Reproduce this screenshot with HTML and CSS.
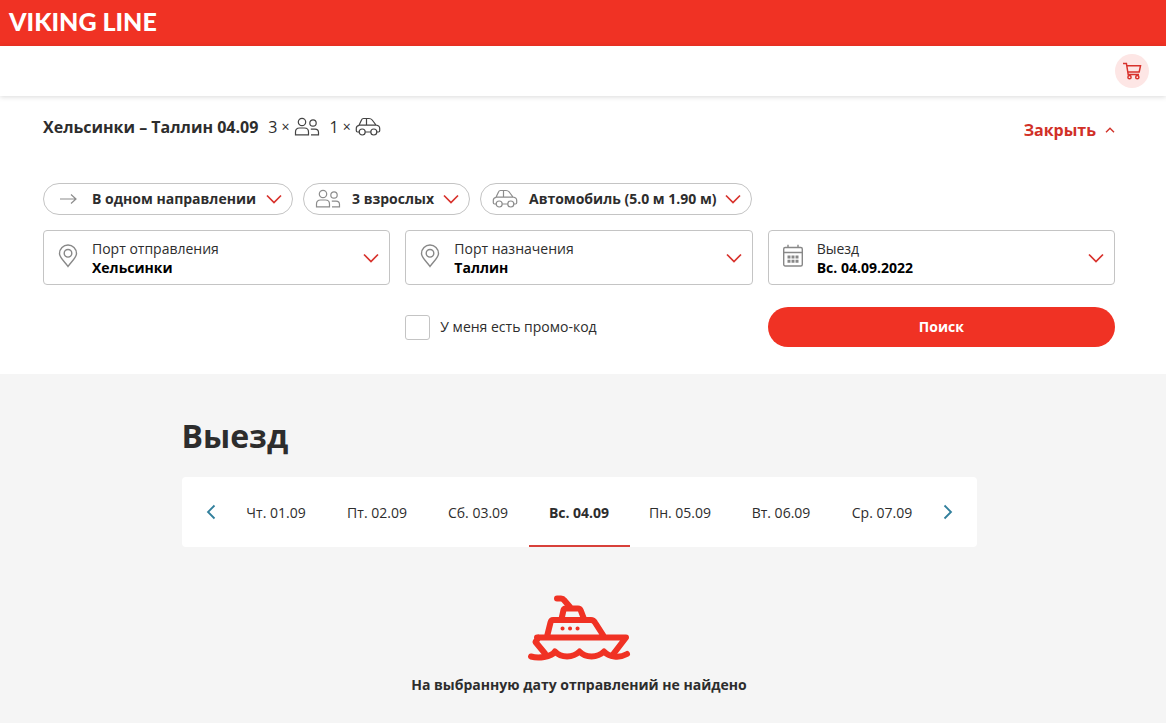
FILE: index.html
```html
<!DOCTYPE html>
<html lang="ru">
<head>
<meta charset="utf-8">
<meta name="viewport" content="width=device-width, initial-scale=1">
<title>Viking Line</title>
<link rel="stylesheet" href="styles.css">
</head>
<body>
<svg class="sprite" aria-hidden="true">
  <symbol id="people" viewBox="0 0 26 20">
    <circle cx="8" cy="5" r="3.700"/><circle cx="19" cy="6" r="3.200"/>
    <path d="M1.500 17.800v-2.800q0-4 4-4h5q4 0 4 4v2.800zM16.800 12.200h4.200q3.500 0 3.500 3.300v2.300h-7.500"/>
  </symbol>
  <symbol id="car" viewBox="0 0 26 20">
    <path d="M4.200 15H2.500q-1.200 0-1.200-1.200v-2.500q0-2.500 2.700-3L6.500 3Q7 1.500 8.500 1.500h5.500q2 0 3.200 1.500L21 8q3.700.6 3.700 3.500v2.300q0 1.200-1.200 1.200h-1.700M10.200 15h5.600M4 8.200h17M11.500 1.500v6.700"/>
    <circle cx="7.200" cy="15" r="3"/><circle cx="18.800" cy="15" r="3"/>
  </symbol>
  <symbol id="pin" viewBox="0 0 20 24">
    <path d="M10 22.500C7.500 18.500 1.500 13.800 1.500 9.500a8.500 8.500 0 0 1 17 0c0 4.300-6 9-8.500 13z"/><circle cx="10" cy="9.300" r="3.800"/>
  </symbol>
  <symbol id="down" viewBox="0 0 16 10"><path d="M1 1.500l7 7 7-7"/></symbol>
</svg>

<header>
  <div class="brand"><a class="logo" href="#">VIKING LINE</a></div>
  <div class="toolbar">
    <button class="cart" type="button" aria-label="Корзина">
      <svg width="20" height="18" viewBox="0 0 20 18"><path d="M1 1.500h3.400l1.800 11h10.800M4.800 3.800H18.500l-1.300 6.200H5.800"/><circle cx="7.500" cy="15.200" r="1.600"/><circle cx="15.300" cy="15.200" r="1.600"/></svg>
    </button>
  </div>
</header>

<main>
  <section class="search">
    <div class="summary">
      <strong class="route">Хельсинки – Таллин 04.09</strong>
      <span class="count">3 <small>×</small><svg class="icon dark"><use href="#people"/></svg></span>
      <span class="count">1 <small>×</small><svg class="icon dark"><use href="#car"/></svg></span>
      <button class="close" type="button">Закрыть
        <svg width="10" height="6" viewBox="0 0 10 6"><path d="M1 5.300l4-4 4 4"/></svg>
      </button>
    </div>

    <form class="form">
      <div class="pills">
        <label class="pill">
          <svg class="icon" viewBox="0 0 26 20"><path d="M5 10h16M16 5.500l5 4.500-5 4.500"/></svg>
          <select aria-label="Направление"><option>В одном направлении</option></select>
          <svg class="chevron"><use href="#down"/></svg>
        </label>
        <button class="pill" type="button">
          <svg class="icon"><use href="#people"/></svg>
          <span>3 взрослых</span>
          <svg class="chevron"><use href="#down"/></svg>
        </button>
        <button class="pill" type="button">
          <svg class="icon"><use href="#car"/></svg>
          <span>Автомобиль (5.0 м 1.90 м)</span>
          <svg class="chevron"><use href="#down"/></svg>
        </button>
      </div>

      <div class="grid">
        <label class="field">
          <svg class="mark"><use href="#pin"/></svg>
          <span class="lines"><span>Порт отправления</span>
            <select><option>Хельсинки</option></select></span>
          <svg class="chevron"><use href="#down"/></svg>
        </label>
        <label class="field">
          <svg class="mark"><use href="#pin"/></svg>
          <span class="lines"><span>Порт назначения</span>
            <select><option>Таллин</option></select></span>
          <svg class="chevron"><use href="#down"/></svg>
        </label>
        <button class="field" type="button">
          <svg class="mark" viewBox="0 0 20 24"><rect x=".7" y="3.500" width="18.600" height="18.500" rx="1.500"/><path d="M.7 8.500h18.600M5 .8v2.700M15 .8v2.700"/><path class="days" d="M4.500 13h11M4.500 17.300h11"/></svg>
          <span class="lines"><span>Выезд</span><strong>Вс. 04.09.2022</strong></span>
          <svg class="chevron"><use href="#down"/></svg>
        </button>
        <label class="promo"><input type="checkbox">У меня есть промо-код</label>
        <button class="submit" type="submit">Поиск</button>
      </div>
    </form>
  </section>

  <section class="results">
    <div class="inner">
      <h1>Выезд</h1>
      <nav class="dates">
        <button class="arrow" type="button" aria-label="Назад"><svg width="10" height="16" viewBox="0 0 10 16"><path d="M8.500 1.500L2 8l6.500 6.500"/></svg></button>
        <button class="date" type="button">Чт. 01.09</button>
        <button class="date" type="button">Пт. 02.09</button>
        <button class="date" type="button">Сб. 03.09</button>
        <button class="date current" type="button" aria-current="date">Вс. 04.09</button>
        <button class="date" type="button">Пн. 05.09</button>
        <button class="date" type="button">Вт. 06.09</button>
        <button class="date" type="button">Ср. 07.09</button>
        <button class="arrow" type="button" aria-label="Вперёд"><svg width="10" height="16" viewBox="0 0 10 16"><path d="M1.500 1.500L8 8l-6.500 6.500"/></svg></button>
      </nav>
      <div class="empty">
        <svg class="ship" width="104" height="68" viewBox="0 0 104 68">
          <path d="M10 43.500H99L86 60.500M18 59.500L8.500 48l3-4.500M20 42.500l3.500-14q.6-2.500 2.500-2.500h38q2.500 0 4 2.500l9 14M34.500 25l2-9q.5-1.500 2-1.500h12.500q2 0 2.800 2l3.200 8.500M30 4.500h4q2 0 3.200 1.700L43 13"/>
          <path d="M4 62.500c7 2 20 1 24-5 6 6.500 18 6.500 24.500 0 6 6.500 18 6.500 24.500 0 5 5.500 15 7 23 2.500"/>
          <path class="windows" d="M35.500 34.500h.1M43 34.500h.1M50.500 34.500h.1"/>
        </svg>
        <p>На выбранную дату отправлений не найдено</p>
      </div>
    </div>
  </section>
</main>
</body>
</html>
```
FILE: styles.css
```css
* { box-sizing: border-box; }

body {
  margin: 0;
  min-height: 100vh;
  background: #f5f5f5;
  color: #2d2d2d;
  font: 14px/20px "Open Sans", "Noto Sans", sans-serif;
}

button, select, input {
  margin: 0;
  font: inherit;
  color: inherit;
}

button {
  padding: 0;
  border: 0;
  background: none;
  cursor: pointer;
}

select {
  appearance: none;
  padding: 0;
  border: 0;
  background: none;
  font-weight: 700;
}

svg {
  flex: none;
  fill: none;
  stroke: currentColor;
}

.sprite {
  display: none;
}

.brand {
  display: flex;
  align-items: center;
  height: 46px;
  padding: 0 9px 4px;
  background: #f03224;
}

.logo {
  color: #fff;
  font: 900 25px/30px Lato, sans-serif;
  text-decoration: none;
}

.toolbar {
  display: flex;
  justify-content: flex-end;
  align-items: center;
  height: 50px;
  padding: 0 17px;
  background: #fff;
  box-shadow: 0 1px 5px rgba(0, 0, 0, .15);
  position: relative;
}

.cart {
  display: grid;
  place-items: center;
  width: 34px;
  height: 34px;
  border-radius: 50%;
  background: #fde6e5;
  color: #d8322c;
}

.cart svg {
  stroke-width: 1.5;
}

.search {
  padding: 17px 51px 27px 43px;
  background: #fff;
}

.summary {
  display: flex;
  align-items: flex-start;
  gap: 10px;
  font-size: 16px;
  line-height: 28px;
}

.count {
  display: flex;
  align-items: center;
  gap: 4px;
}

.count small {
  font-size: 14px;
}

.icon {
  width: 26px;
  height: 20px;
  color: #8c8c8c;
  stroke-width: 1.2;
}

.icon.dark {
  color: #444;
}

.close {
  display: flex;
  align-items: center;
  gap: 9px;
  margin-left: auto;
  padding-top: 3px;
  color: #d13027;
  font-weight: 700;
}

.close svg {
  stroke-width: 1.4;
}

.form {
  margin-top: 39px;
}

.pills {
  display: flex;
  flex-wrap: wrap;
  gap: 10px;
}

.pill {
  display: flex;
  align-items: center;
  height: 32px;
  padding: 0 10px 0 11px;
  border: 1px solid #c4c4c4;
  border-radius: 16px;
  font-weight: 700;
}

.pill .icon {
  margin-right: 11px;
}

.pill .chevron {
  margin-left: 9px;
}

.chevron {
  width: 16px;
  height: 10px;
  color: #d8322c;
  stroke-width: 1.7;
}

.grid {
  display: grid;
  grid-template-columns: repeat(3, 1fr);
  gap: 22px 15px;
  margin-top: 15px;
}

.field {
  display: flex;
  align-items: center;
  height: 55px;
  padding: 0 10px 0 14px;
  border: 1px solid #c4c4c4;
  border-radius: 4px;
  text-align: left;
}

.mark {
  width: 20px;
  height: 24px;
  margin-bottom: 4px;
  color: #888;
  stroke-width: 1.4;
}

.days {
  stroke-width: 3;
  stroke-dasharray: 3 1;
}

.lines {
  display: flex;
  flex: 1;
  flex-direction: column;
  margin-left: 14px;
  line-height: 19px;
}

.lines select,
.lines strong {
  color: #000;
}

.promo {
  display: flex;
  grid-column: 2;
  align-items: center;
  gap: 10px;
}

.promo input {
  appearance: none;
  width: 25px;
  height: 25px;
  border: 1px solid #c4c4c4;
  border-radius: 3px;
}

.submit {
  height: 40px;
  border-radius: 20px;
  background: #f03224;
  color: #fff;
  font-weight: 700;
}

.results {
  padding: 39px 51px 0 43px;
}

.inner {
  max-width: 795px;
  margin: 0 auto;
}

h1 {
  margin: 0;
  font-size: 32px;
  line-height: 46px;
}

.dates {
  display: flex;
  height: 70px;
  margin-top: 18px;
  padding: 0 14px;
  border-radius: 4px;
  background: #fff;
}

.arrow {
  display: grid;
  place-items: center;
  width: 30px;
  color: #317f9c;
  stroke-width: 1.8;
}

.date {
  flex: 1;
  padding-top: 4px;
  border-bottom: 2px solid transparent;
}

.current {
  border-color: #d8403a;
  font-weight: 700;
}

.empty {
  display: flex;
  flex-direction: column;
  align-items: center;
  padding-top: 47px;
}

.ship {
  color: #f03224;
  stroke-width: 6;
  stroke-linecap: round;
  stroke-linejoin: round;
}

.windows {
  stroke-width: 4;
}

.empty p {
  margin: 13px 0 0;
  font-weight: 700;
}
```
